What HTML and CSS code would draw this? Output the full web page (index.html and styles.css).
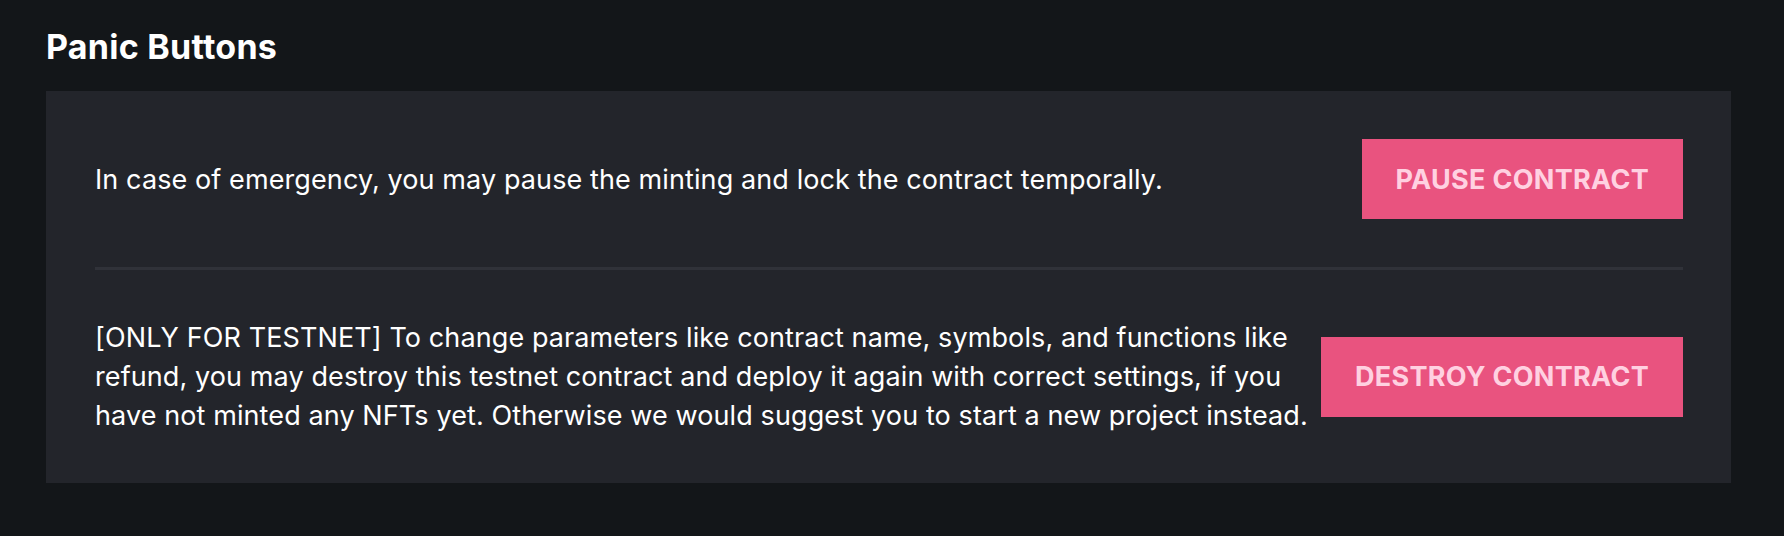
FILE: index.html
```html
<!DOCTYPE html>
<html lang="en">
<head>
<meta charset="utf-8">
<title>Panic Buttons</title>
<link rel="stylesheet" href="styles.css">
</head>
<body>
<main class="page">
  <h2 class="title">Panic Buttons</h2>
  <section class="card">
    <div class="row">
      <p class="text">In case of emergency, you may pause the minting and lock the contract temporally.</p>
      <button class="btn">PAUSE CONTRACT</button>
    </div>
    <div class="divider"></div>
    <div class="row">
      <p class="text">[ONLY FOR TESTNET] To change parameters like contract name, symbols, and functions like refund, you may destroy this testnet contract and deploy it again with correct settings, if you have not minted any NFTs yet. Otherwise we would suggest you to start a new project instead.</p>
      <button class="btn">DESTROY CONTRACT</button>
    </div>
  </section>
</main>
</body>
</html>
```

FILE: styles.css
```css
html, body {
  margin: 0;
  padding: 0;
  background: #131619;
}
body {
  font-family: Inter, "Noto Sans", "Liberation Sans", sans-serif;
  color: #ffffff;
}
.page {
  padding: 27px 53px 0 46px;
}
.title {
  margin: 0;
  font-size: 34px;
  line-height: 40px;
  font-weight: 700;
  letter-spacing: 0.25px;
  color: #ffffff;
}
.card {
  margin-top: 24px;
  background: #23252b;
  padding: 0 48px 0 49px;
}
.row {
  display: flex;
  align-items: center;
  justify-content: space-between;
  gap: 8px;
  padding: 48px 0;
}
.text {
  margin: 0;
  font-size: 27px;
  line-height: 39px;
  font-weight: 400;
  letter-spacing: 0.1px;
  color: #ffffff;
}
.divider {
  height: 3px;
  background: #303239;
}
.btn {
  flex-shrink: 0;
  height: 80px;
  padding: 0 34px;
  border: 0;
  border-radius: 0;
  background: #e9537f;
  color: #ffd1e1;
  font-family: Inter, "Noto Sans", "Liberation Sans", sans-serif;
  font-size: 27px;
  font-weight: 700;
  letter-spacing: 0.3px;
  cursor: pointer;
}
```
